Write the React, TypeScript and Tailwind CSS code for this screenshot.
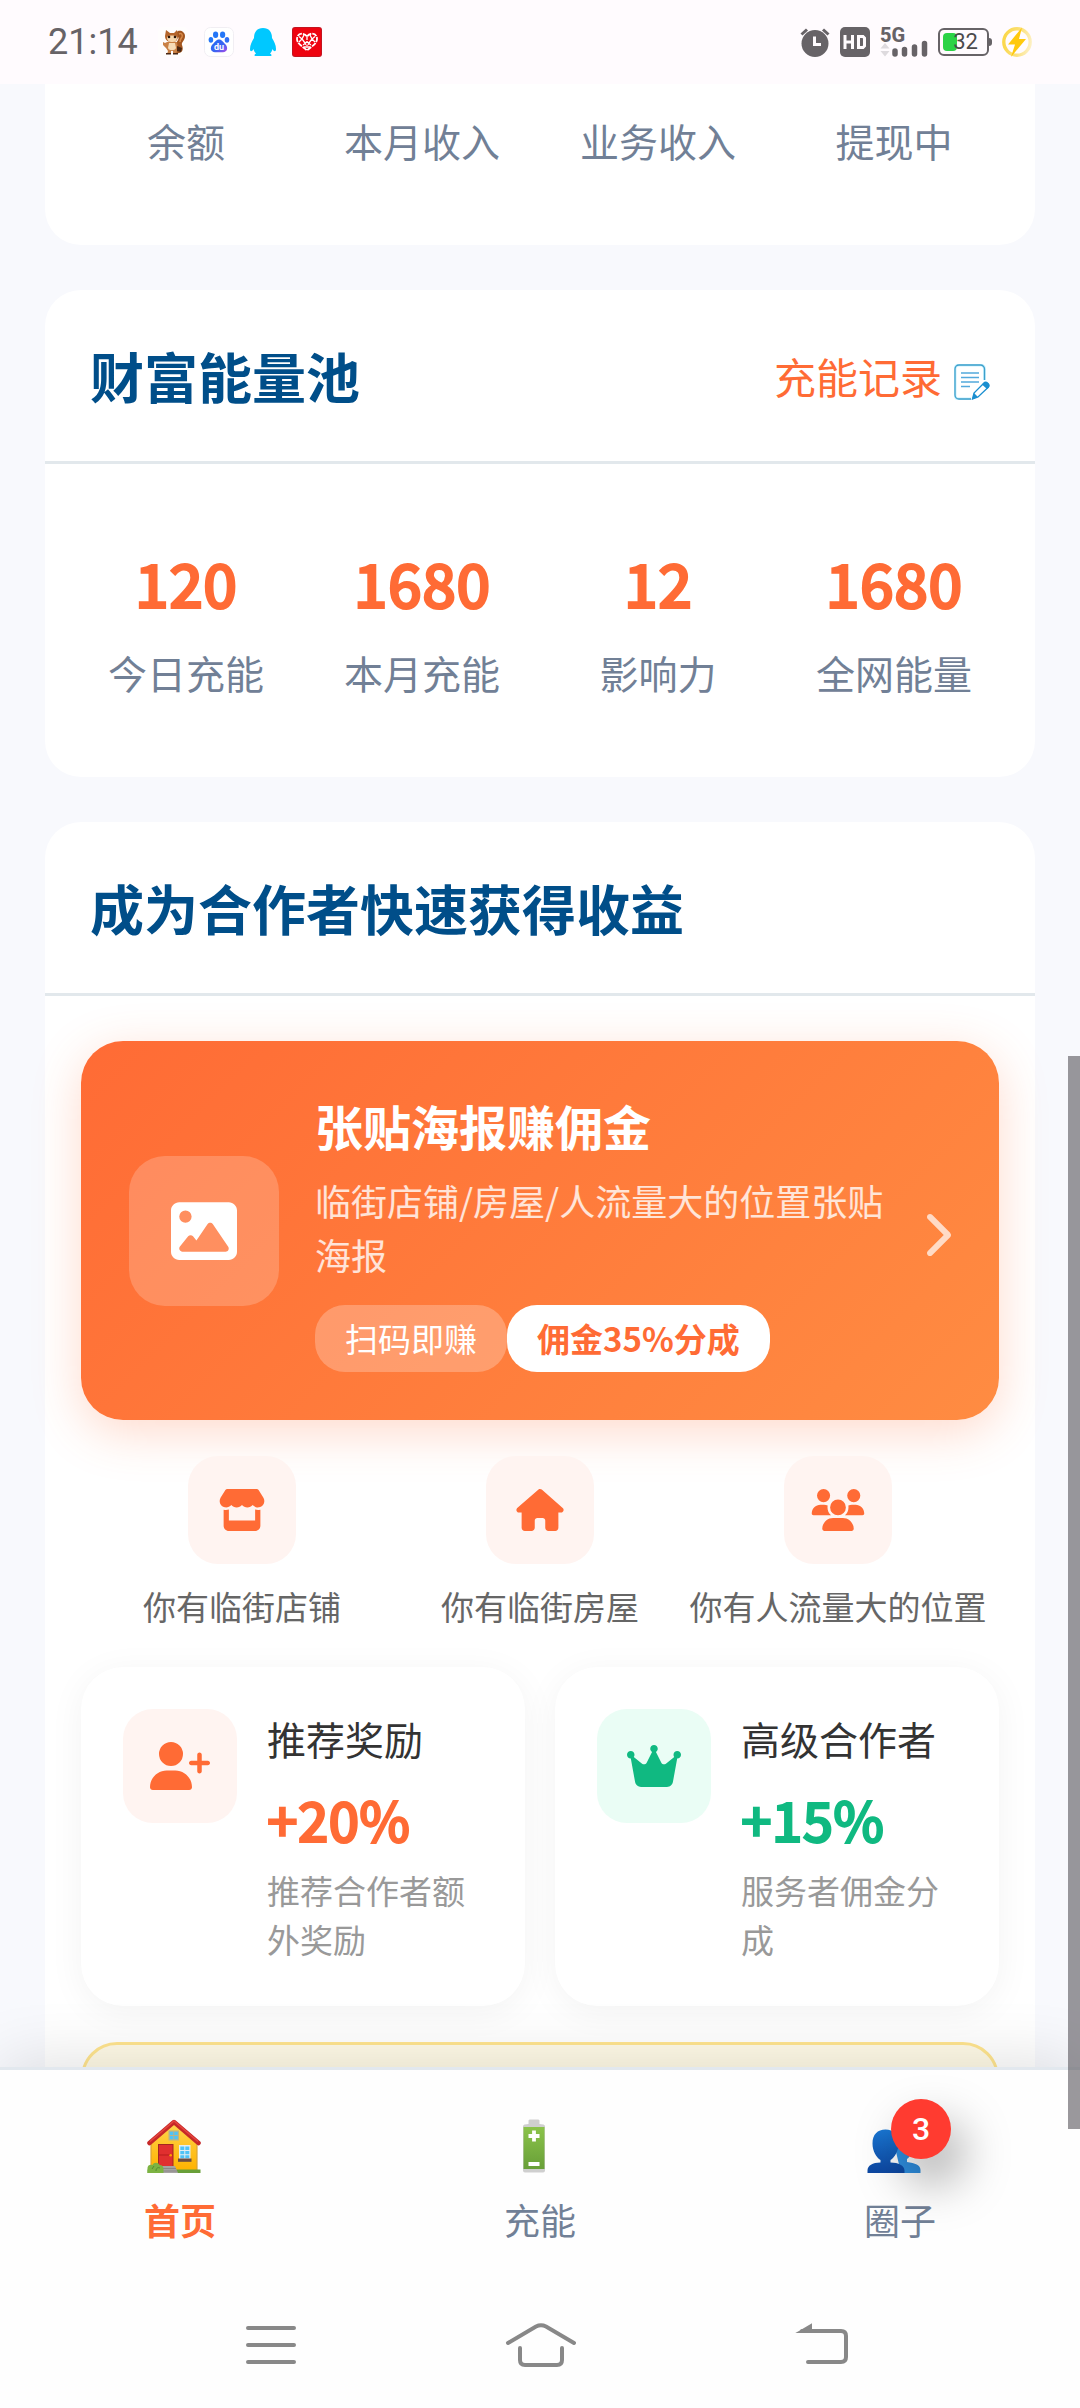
import type { ReactNode } from "react";
import {
  FaChevronRight,
  FaCrown,
  FaHouse,
  FaImage,
  FaStore,
  FaUserPlus,
  FaUsers,
} from "react-icons/fa6";

const incomeStats = ["余额", "本月收入", "业务收入", "提现中"];

const energyStats = [
  { value: "120", label: "今日充能" },
  { value: "1680", label: "本月充能" },
  { value: "12", label: "影响力" },
  { value: "1680", label: "全网能量" },
];

const places = [
  { icon: FaStore, label: "你有临街店铺" },
  { icon: FaHouse, label: "你有临街房屋" },
  { icon: FaUsers, label: "你有人流量大的位置" },
];

function SquirrelIcon() {
  return (
    <svg viewBox="0 0 30 30" className="size-[30px]" aria-hidden="true">
      <rect width="30" height="30" rx="5" fill="#fffdfd" />
      <path d="M18 26c6 1 8-3 6-8-1-3 3-4 3-9 0-4-4-6-7-5-3 2-2 5 0 6 2 2-2 5-3 8z" fill="#a3561f" />
      <path d="M21 7c2-1 4 0 3 3-1 2-2 2-2 5" stroke="#d98b4a" strokeWidth="1.5" fill="none" />
      <path d="M8 3l4 3h4l3-3 1 6c0 5-3 6-6 6s-7-1-7-6z" fill="#b5652b" />
      <path d="M9 10c2-2 8-2 10 0 0 4-2 5-5 5s-5-1-5-5z" fill="#f6d7ae" />
      <circle cx="11" cy="10" r="1.3" fill="#2b1608" />
      <circle cx="17" cy="10" r="1.3" fill="#2b1608" />
      <path d="M9 15h10l1 7-2 5h-3v-3h-2v3H9l1-3-2-3-3-3v-3l2 1z" fill="#c98146" />
      <path d="M11 16h6l1 5c-1 3-7 3-8 0z" fill="#f6dcb8" />
      <path d="M19 19l5 2-1 4-4-1zM8 26h5v1.500H8zM15 26h5v1.500h-5z" fill="#4a2713" />
    </svg>
  );
}

function BaiduIcon() {
  return (
    <svg viewBox="0 0 30 30" className="size-[30px]" aria-hidden="true">
      <defs>
        <linearGradient id="paw" x1="0" y1="0" x2="1" y2="1">
          <stop offset="0" stopColor="#1f6cf5" />
          <stop offset="0.600" stopColor="#3d63f2" />
          <stop offset="1" stopColor="#b04ae8" />
        </linearGradient>
      </defs>
      <rect x="0.500" y="0.500" width="29" height="29" rx="6" fill="#fff" stroke="#f1eef3" />
      <ellipse cx="11.600" cy="7.800" rx="2.600" ry="3.300" fill="#2476f7" />
      <ellipse cx="18.600" cy="7.800" rx="2.600" ry="3.300" fill="#2476f7" />
      <ellipse cx="6.900" cy="12.800" rx="2.300" ry="2.900" fill="#2476f7" />
      <ellipse cx="23" cy="12.800" rx="2.300" ry="2.900" fill="#2f6ff5" />
      <path d="M15 12.500c3 0 4 2.500 5.800 4.300 4 3.500 2.600 8.400-1.800 8.400h-8c-4.400 0-5.800-4.900-1.800-8.400C11 15 12 12.500 15 12.500z" fill="url(#paw)" />
      <text x="15" y="23" textAnchor="middle" fontSize="9" fontWeight="700" fill="#fff">du</text>
    </svg>
  );
}

function PenguinIcon() {
  return (
    <svg viewBox="0 0 26 30" className="h-[30px] w-[26px]" aria-hidden="true">
      <path d="M13 1c6 0 9 4 9 10 2 3 4 7 4 11 0 3-2 3-3.500 0-.5 2-1.500 3.500-2.500 4.500 2 1 2 2.500 0 2.500H6c-2 0-2-1.500 0-2.500-1-1-2-2.500-2.500-4.500C2 25 0 25 0 22c0-4 2-8 4-11 0-6 3-10 9-10z" fill="#00c8ff" />
    </svg>
  );
}

function HeartIcon() {
  return (
    <svg viewBox="0 0 30 30" className="size-[30px]" aria-hidden="true">
      <rect width="30" height="30" rx="3" fill="#c41420" />
      <rect x="1" y="1" width="28" height="28" rx="2" fill="#ee0310" />
      <path d="M15 9.500C12 5 5 6 5 12c0 5 6 7.500 10 11.500C19 19.500 25 17 25 12c0-6-7-7-10-2.500z" fill="none" stroke="#fff" strokeWidth="1.800" strokeDasharray="5 1" />
      <path d="M7 9.500l3 2.500-3 3M12 8l-2 4 3 4M23 9.500l-3 2.500 3 3M18 8l2 4-3 4M11 18l4-3 4 3M12 20h6M15 10v3" fill="none" stroke="#fff" strokeWidth="1.300" />
      <circle cx="15" cy="16.500" r="1.800" fill="none" stroke="#fff" />
    </svg>
  );
}

function AlarmIcon() {
  return (
    <svg viewBox="0 0 30 30" className="size-[30px]" aria-hidden="true">
      <circle cx="15" cy="16.500" r="13.500" fill="#676367" />
      <path d="M1.500 7.500L7 2.500M28.500 7.500L23 2.500" stroke="#676367" strokeWidth="3" />
      <path d="M14.500 9.500v8h6.500" fill="none" stroke="#fffbfe" strokeWidth="3" />
    </svg>
  );
}

function HdIcon() {
  return (
    <svg viewBox="0 0 30 30" className="size-[30px]" aria-hidden="true">
      <rect width="30" height="30" rx="5" fill="#676367" />
      <path d="M5 8v14M12.500 8v14M5 15h7.500" fill="none" stroke="#fffbfe" strokeWidth="3" />
      <path d="M18.500 9.500h4.500l1.500 1.500v8l-1.500 1.500h-4.500z" fill="none" stroke="#fffbfe" strokeWidth="3" />
    </svg>
  );
}

function SignalIcon() {
  return (
    <svg viewBox="0 0 48 30" className="h-[30px] w-12 overflow-visible" aria-hidden="true">
      <text x="0" y="15" fontSize="20" fontWeight="800" fill="#676367">5G</text>
      <path d="M0.500 21.500L5 16l4.500 5.500zM0.500 24L5 29.500 9.500 24z" fill="#dedade" />
      <path d="M15 24v3M24.500 22.500v4.500M34.500 20v7M44.500 16.500V27" stroke="#676367" strokeWidth="5.500" strokeLinecap="round" />
    </svg>
  );
}

function ChargeIcon() {
  return (
    <svg viewBox="0 0 30 30" className="size-[30px]" aria-hidden="true">
      <defs>
        <linearGradient id="ring" x1="0" y1="0.600" x2="1" y2="0.800">
          <stop offset="0" stopColor="#fbd84d" />
          <stop offset="0.500" stopColor="#fbe079" />
          <stop offset="1" stopColor="#fdf0c4" />
        </linearGradient>
      </defs>
      <circle cx="15" cy="15" r="13.200" fill="none" stroke="url(#ring)" strokeWidth="3.400" />
      <path d="M20 0.500L6 17.500h7L9 30 24 12h-7z" fill="#ffc90d" />
    </svg>
  );
}

function StatusBar() {
  return (
    <header className="flex h-[84px] shrink-0 items-center justify-between bg-[#fffbfe] px-12 font-[Roboto,sans-serif]">
      <div className="flex items-center gap-4">
        <span className="mr-1 text-[36px] leading-none text-[#676367]">21:14</span>
        <SquirrelIcon />
        <BaiduIcon />
        <PenguinIcon />
        <HeartIcon />
      </div>
      <div className="flex items-center gap-[10px]">
        <AlarmIcon />
        <HdIcon />
        <SignalIcon />
        <div className="flex items-center">
          <div className="relative flex h-7 w-[51px] items-center justify-center rounded-md border-2 border-[#676367]">
            <span className="absolute left-[3px] h-[18px] w-[14px] rounded-sm bg-[#2bd346]" />
            <span className="relative pl-1 text-[22px] leading-none text-[#4c4a4c]">32</span>
          </div>
          <span className="h-2 w-[3px] rounded-r-sm bg-[#676367]" />
        </div>
        <ChargeIcon />
      </div>
    </header>
  );
}

function NoteIcon() {
  return (
    <svg viewBox="0 0 36 36" className="mt-3 size-9" fill="none" aria-hidden="true">
      <path d="M30.500 16V5a4 4 0 0 0-4-4H5a4 4 0 0 0-4 4v26a4 4 0 0 0 4 4h12" stroke="#c9f1ff" strokeWidth="3" />
      <path d="M30.500 16V5a4 4 0 0 0-4-4H5a4 4 0 0 0-4 4v26a4 4 0 0 0 4 4h12" stroke="#3d9fca" strokeWidth="1.300" />
      <path d="M7 9h18M7 13.500h18M7 18h18M7 22.500h9" stroke="#53a9dc" strokeWidth="1.400" />
      <path d="M18.500 35l1.500-6L29.500 19.500a3 3 0 0 1 4.500 4L24 33z" fill="#fff" stroke="#1b8fd0" strokeWidth="1.300" />
      <path d="M28 20.500c2-3 5-3 7-.5 1 2 0 4-2 5zM18 35.500l2-6.500 4 4z" fill="#1b8fd0" />
    </svg>
  );
}

function CardHeader({ title, children }: { title: string; children?: ReactNode }) {
  return (
    <div className="flex h-[174px] items-center justify-between border-b-3 border-[#e2e8ec] px-[45px]">
      <h2 className="text-[54px] leading-[80px] font-bold text-[#004e89]">{title}</h2>
      {children}
    </div>
  );
}

function PosterBanner() {
  return (
    <a
      href="#poster"
      className="flex items-center rounded-[42px] bg-[linear-gradient(135deg,#ff6b35,#ff8c42)] p-12 text-white shadow-[0_12px_48px_rgba(255,107,53,0.25)]"
    >
      <span className="flex size-[150px] shrink-0 items-center justify-center rounded-[36px] bg-white/20">
        <FaImage className="size-[66px]" />
      </span>
      <span className="mr-6 ml-9 flex-1">
        <span className="block text-[48px] leading-[72px] font-bold">张贴海报赚佣金</span>
        <span className="mt-3 block text-[36px] leading-[54px] text-white/80">
          临街店铺/房屋/人流量大的位置张贴海报
        </span>
        <span className="mt-6 flex text-[33px] leading-[67px]">
          <span className="rounded-[30px] bg-white/25 px-[30px]">扫码即赚</span>
          <span className="rounded-[30px] bg-white px-[30px] font-bold text-[#ff6b35]">
            佣金35%分成
          </span>
        </span>
      </span>
      <FaChevronRight className="mt-2 h-12 w-[30px] shrink-0 opacity-70" />
    </a>
  );
}

function RewardCard({
  icon,
  title,
  value,
  desc,
  iconClass,
  valueClass,
}: {
  icon: ReactNode;
  title: string;
  value: string;
  desc: string;
  iconClass: string;
  valueClass: string;
}) {
  return (
    <div className="flex flex-1 items-start gap-[30px] rounded-[42px] bg-white p-[42px] shadow-[0_6px_36px_rgba(0,0,0,0.05)]">
      <div className={`flex size-[114px] shrink-0 items-center justify-center rounded-[30px] ${iconClass}`}>
        {icon}
      </div>
      <div>
        <h3 className="text-[39px] leading-[58px] text-[#333]">{title}</h3>
        <p className={`mt-3 text-[54px] leading-[80px] font-medium [-webkit-text-stroke:2px_currentColor] ${valueClass}`}>
          {value}
        </p>
        <p className="mt-[7px] text-[33px] leading-[49px] text-[#999]">{desc}</p>
      </div>
    </div>
  );
}

function HouseEmoji() {
  return (
    <svg viewBox="0 0 54 54" className="size-[54px]" aria-hidden="true">
      <defs>
        <linearGradient id="wall" x1="0" y1="0" x2="0" y2="1">
          <stop offset="0" stopColor="#ffd54f" />
          <stop offset="1" stopColor="#ffb300" />
        </linearGradient>
      </defs>
      <path d="M4 51V24L27 3l23 21v27z" fill="url(#wall)" />
      <path d="M4 51V24M50 24v27" stroke="#d9a437" strokeWidth="1.200" />
      <path d="M2.500 24L27 3l24.500 21" fill="none" stroke="#c62828" strokeWidth="4.500" strokeLinecap="round" strokeLinejoin="round" />
      <path d="M3 22.500L27 2l24 20.500" fill="none" stroke="#e5453d" strokeWidth="1.500" />
      <rect x="21.500" y="11.500" width="10.500" height="10" fill="#b8b48a" />
      <path d="M22.800 12.800h3.500v3.300h-3.500zM27.300 12.800h3.500v3.300h-3.500zM22.800 17h3.500v3.300h-3.500zM27.300 17h3.500v3.300h-3.500z" fill="#4fc3f7" />
      <rect x="11" y="25" width="15.500" height="22" fill="#a3281f" />
      <rect x="12" y="26" width="13.500" height="21" fill="#e02f2f" />
      <path d="M12 36h13.500" stroke="#b71c1c" />
      <circle cx="23.700" cy="36.300" r="1.300" fill="#ffa000" />
      <rect x="32" y="26" width="11.500" height="14" fill="#e3eef2" />
      <path d="M33.300 27.500h4v3.600h-4zM38.300 27.500h4v3.600h-4zM33.300 32h4v3.300h-4zM38.300 32h4v3.300h-4zM33.300 36.200h4v3h-4zM38.300 36.200h4v3h-4z" fill="#4fc3f7" />
      <rect x="31" y="39.500" width="13.500" height="3.300" fill="#6d4c41" />
      <path d="M0.500 50.500h53V54H.5z" fill="#689f38" />
      <path d="M15 47h13l3 7H15z" fill="#a6a3a3" />
      <path d="M16 49.500h13M16 52h14" stroke="#8a8787" />
      <path d="M.5 54v-5c0-3 3-4 5-3 1-3 6-3 7 0 3 0 4 2 4 4v4z" fill="#7cb342" />
      <path d="M5 50l2-3M9 52c0-3 2-4 4-3" stroke="#558b2f" fill="none" />
    </svg>
  );
}

function BatteryEmoji() {
  return (
    <svg viewBox="0 0 54 54" className="size-[54px]" aria-hidden="true">
      <defs>
        <linearGradient id="cell" x1="0" y1="0" x2="0" y2="1">
          <stop offset="0" stopColor="#8bc34a" />
          <stop offset="1" stopColor="#689f38" />
        </linearGradient>
      </defs>
      <path d="M21.500 1.500Q22 .5 23 .5h8q1 0 1.500 1V5l4 .5q1.500.5 1.500 2v44q0 2-2 2H18q-2 0-2-2v-44q0-1.500 1.500-2l4-.5z" fill="#cfcfcf" />
      <path d="M16.500 8h21v42h-21z" fill="url(#cell)" />
      <path d="M27 11.500v11M21.500 17h11M21.500 45h11" stroke="#fff" strokeWidth="3.800" />
    </svg>
  );
}

function PeopleEmoji() {
  return (
    <svg viewBox="0 0 54 54" className="size-[54px]" aria-hidden="true">
      <defs>
        <linearGradient id="front" x1="0" y1="0" x2="0" y2="1">
          <stop offset="0" stopColor="#1976d2" />
          <stop offset="1" stopColor="#0d47a1" />
        </linearGradient>
      </defs>
      <path d="M26 20c2-8 22-8 20 6-1 8-3 12-6 14v3c8 1 13.500 3 13.500 8v3H34z" fill="#2f8fe0" />
      <path d="M18.500 10.500c8 0 13 5 13 14 0 8-4 14-8 16.500v2.500c8 0 14 3 14 8V54H.5v-2.500c0-5 5-8 13-8V41c-4-2.500-8-8.500-8-16.500 0-9 5-14 13-14z" fill="url(#front)" />
    </svg>
  );
}

function TabBar() {
  return (
    <nav className="relative grid shrink-0 grid-cols-3 border-t-3 border-[#e2e8ee] bg-[#fefefe] pt-[49px] pb-[37px] text-[36px] leading-[52px] text-[#718096] shadow-[0_-6px_60px_rgba(0,0,0,0.12)]">
      <a href="#home" className="flex flex-col items-center gap-[20px] font-bold text-[#ff6b35]">
        <span className="pr-3">
          <HouseEmoji />
        </span>
        首页
      </a>
      <a href="#energy" className="flex flex-col items-center gap-[20px]">
        <span className="pr-3">
          <BatteryEmoji />
        </span>
        充能
      </a>
      <a href="#circle" className="flex flex-col items-center gap-[20px]">
        <span className="relative pr-3">
          <PeopleEmoji />
          <span className="absolute -top-5 left-6 flex size-[60px] items-center justify-center rounded-full bg-[#ff3b30] font-[Roboto,sans-serif] text-[32px] leading-none font-medium text-white shadow-[12px_24px_48px_rgba(0,0,0,0.35)]">
            3
          </span>
        </span>
        圈子
      </a>
    </nav>
  );
}

function SystemNav() {
  return (
    <div className="relative grid h-[126px] shrink-0 grid-cols-3 items-center justify-items-center bg-[#fefefe] px-[135px] text-[#888]">
      <button type="button" aria-label="菜单">
        <svg viewBox="0 0 80 44" className="h-11 w-20" fill="none" stroke="currentColor" strokeWidth="4" strokeLinecap="round">
          <path d="M18 5h46M18 22h46M18 39h46" />
        </svg>
      </button>
      <button type="button" aria-label="主屏幕">
        <svg viewBox="0 0 80 44" className="h-11 w-20" fill="none" stroke="currentColor" strokeWidth="4" strokeLinecap="round">
          <path d="M8 20L36 3.500q5-2.500 10 0L74 20M20 25v12q0 5 5 5h32q5 0 5-5V25" />
        </svg>
      </button>
      <button type="button" aria-label="返回">
        <svg viewBox="0 0 80 44" className="h-11 w-20" fill="none" stroke="currentColor" strokeWidth="4" strokeLinecap="round">
          <path d="M32 8h39q5 0 5 5v21q0 5-5 5H38" />
          <path d="M29 9L41 2v7z" fill="currentColor" strokeWidth="2" />
        </svg>
      </button>
    </div>
  );
}

export default function App() {
  return (
    <div className="relative flex h-screen flex-col overflow-hidden bg-[#f8f9fd] font-['Noto_Sans_CJK_SC',sans-serif]">
      <StatusBar />
      <main className="flex min-h-0 flex-1 flex-col gap-[45px] overflow-hidden px-[45px]">
        <section className="grid shrink-0 grid-cols-4 rounded-b-[36px] bg-white px-[23px] pt-[27px] pb-[76px] text-center text-[39px] leading-[58px] text-[#718096]">
          {incomeStats.map((label) => (
            <span key={label}>{label}</span>
          ))}
        </section>

        <section className="shrink-0 rounded-[36px] bg-white">
          <CardHeader title="财富能量池">
            <a href="#records" className="flex items-center gap-3 text-[42px] leading-[62px] text-[#ff6b35]">
              充能记录
              <NoteIcon />
            </a>
          </CardHeader>
          <dl className="grid grid-cols-4 px-[23px] pt-[70px] pb-[76px] text-center">
            {energyStats.map((s) => (
              <div key={s.label} className="flex flex-col-reverse gap-[13px]">
                <dt className="text-[39px] leading-[58px] text-[#718096]">{s.label}</dt>
                <dd className="text-[60px] leading-[96px] font-medium text-[#ff6b35] [-webkit-text-stroke:2px_currentColor]">
                  {s.value}
                </dd>
              </div>
            ))}
          </dl>
        </section>

        <section className="shrink-0 rounded-[36px] bg-white">
          <CardHeader title="成为合作者快速获得收益" />
          <div className="px-9 pt-[45px]">
            <PosterBanner />
            <ul className="grid grid-cols-3 px-3 pt-9">
              {places.map(({ icon: Icon, label }) => (
                <li key={label} className="flex flex-col items-center gap-[17px]">
                  <span className="flex size-[108px] items-center justify-center rounded-[30px] bg-[#fff4f1] text-[#ff6b35]">
                    <Icon className="h-[42px] w-[54px]" />
                  </span>
                  <span className="text-[33px] leading-[50px] whitespace-nowrap text-[#666]">{label}</span>
                </li>
              ))}
            </ul>
            <div className="mt-9 flex gap-[30px]">
              <RewardCard
                icon={<FaUserPlus className="h-12 w-[60px]" />}
                title="推荐奖励"
                value="+20%"
                desc="推荐合作者额外奖励"
                iconClass="bg-[#fff4f1] text-[#ff6b35]"
                valueClass="text-[#ff6b35]"
              />
              <RewardCard
                icon={<FaCrown className="h-12 w-[54px]" />}
                title="高级合作者"
                value="+15%"
                desc="服务者佣金分成"
                iconClass="bg-[#eafdf5] text-[#10b981]"
                valueClass="text-[#10b981]"
              />
            </div>
            <div className="mt-9 h-[120px] rounded-[36px] border-3 border-[#ffe58f] bg-[#fffae6]" />
          </div>
        </section>
      </main>
      <TabBar />
      <SystemNav />
      {/* scroll thumb */}
      <div className="absolute top-[1056px] right-0 h-[1073px] w-3 bg-[#57545a]/60" />
    </div>
  );
}
